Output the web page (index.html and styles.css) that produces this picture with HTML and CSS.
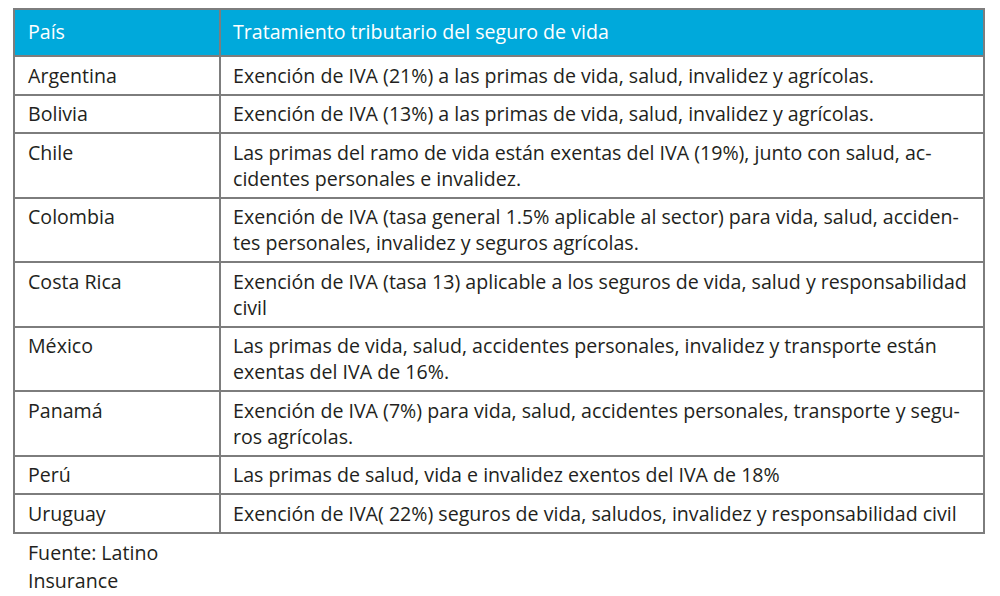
FILE: index.html
```html
<!DOCTYPE html>
<html lang="es">
<head>
<meta charset="utf-8">
<title>Tratamiento tributario del seguro de vida</title>
<link rel="stylesheet" href="styles.css">
</head>
<body>
<div class="page">
<table class="tax">
<thead>
<tr><th class="c1">País</th><th class="c2">Tratamiento tributario del seguro de vida</th></tr>
</thead>
<tbody>
<tr><td>Argentina</td><td>Exención de IVA (21%) a las primas de vida, salud, invalidez y agrícolas.</td></tr>
<tr><td>Bolivia</td><td>Exención de IVA (13%) a las primas de vida, salud, invalidez y agrícolas.</td></tr>
<tr><td>Chile</td><td>Las primas del ramo de vida están exentas del IVA (19%), junto con salud, ac-<br>cidentes personales e invalidez.</td></tr>
<tr><td>Colombia</td><td>Exención de IVA (tasa general 1.5% aplicable al sector) para vida, salud, acciden-<br>tes personales, invalidez y seguros agrícolas.</td></tr>
<tr><td>Costa Rica</td><td>Exención de IVA (tasa 13) aplicable a los seguros de vida, salud y responsabilidad<br>civil</td></tr>
<tr><td>México</td><td>Las primas de vida, salud, accidentes personales, invalidez y transporte están<br>exentas del IVA de 16%.</td></tr>
<tr><td>Panamá</td><td>Exención de IVA (7%) para vida, salud, accidentes personales, transporte y segu-<br>ros agrícolas.</td></tr>
<tr><td>Perú</td><td>Las primas de salud, vida e invalidez exentos del IVA de 18%</td></tr>
<tr><td>Uruguay</td><td>Exención de IVA( 22%) seguros de vida, saludos, invalidez y responsabilidad civil</td></tr>
</tbody>
</table>
<p class="source">Fuente: Latino<br>Insurance</p>
</div>
</body>
</html>
```
FILE: styles.css
```css
html, body {
  margin: 0;
  padding: 0;
  background: #ffffff;
}
body {
  font-family: "Open Sans", "Noto Sans", sans-serif;
  color: #231f20;
  font-size: 19.6px;
  letter-spacing: 0;
}
.page {
  padding: 8px 0 0 13px;
}
.tax {
  border-collapse: collapse;
  width: 972px;
  table-layout: fixed;
}
.tax th, .tax td {
  border: 2px solid #7d7d7d;
  text-align: left;
  vertical-align: top;
  line-height: 26px;
  padding: 5.5px 12px 5px 13px;
  white-space: nowrap;
}
.tax td + td, .tax th + th {
  padding-left: 12px;
}
.tax th {
  background: #00a9db;
  color: #ffffff;
  font-weight: 400;
  padding-top: 9px;
  padding-bottom: 10px;
}
.tax th.c1 { width: 179px; }
.source {
  margin: 5px 0 0 15px;
  line-height: 28px;
}
```
